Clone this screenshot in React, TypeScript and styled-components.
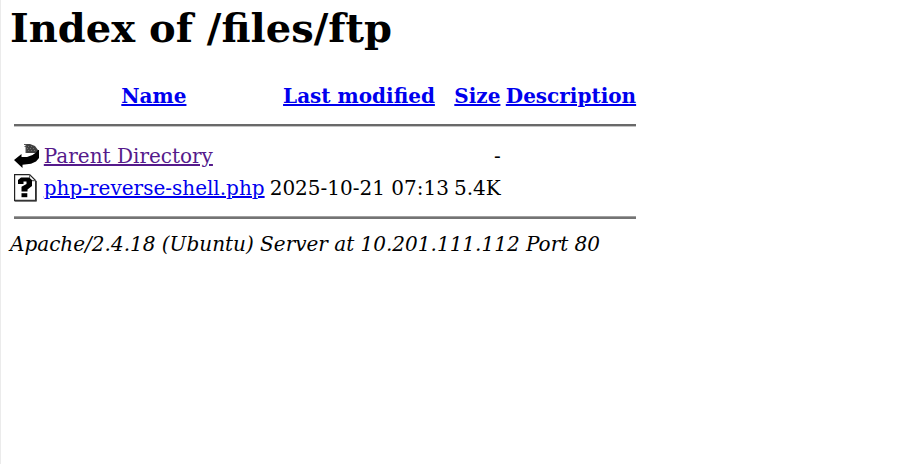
import React from "react";
import styled, { createGlobalStyle } from "styled-components";

const Global = createGlobalStyle`
  body {
    margin: 0;
    background: #fff;
    color: #000;
    font-family: "DejaVu Serif", serif;
  }
`;

const Page = styled.main`
  box-sizing: border-box;
  width: 906px;
  height: 464px;
  padding: 4px 9px;
  overflow: hidden;
  border-left: 1px solid #ebebeb;
  font-size: 20px;
  line-height: 24px;
  white-space: nowrap;
`;

const Title = styled.h1`
  margin: 0 0 33px;
  font-size: 40px;
  line-height: 47px;
`;

const Listing = styled.section`
  width: 622px;
  margin-left: 4px;
`;

const Row = styled.div<{ $gap?: number }>`
  display: grid;
  grid-template-columns: 24.8px 220.2px 180px 46.8px 1fr;
  column-gap: 5px;
  height: 24px;
  margin-bottom: ${({ $gap = 0 }) => $gap}px;
`;

const Heading = styled.div`
  display: flex;
  justify-content: center;
  font-weight: bold;
`;

const Cell = styled.div<{ $end?: boolean }>`
  display: flex;
  justify-content: ${({ $end }) => ($end ? "flex-end" : "flex-start")};
`;

const IconCell = styled.div`
  display: flex;
  align-items: center;
  height: 24px;
`;

const Icon = styled.svg`
  display: block;
  flex: none;
`;

const Link = styled.a<{ $visited?: boolean }>`
  color: ${({ $visited }) => ($visited ? "#551a8b" : "#0000ee")};
  text-decoration: underline;
`;

const Rule = styled.hr<{ $after: number; $raised?: boolean }>`
  box-sizing: border-box;
  height: 3px;
  margin: 0 0 ${({ $after }) => $after}px;
  border: 0;
  border-top: ${({ $raised }) => ($raised ? "1px solid #a0a0a0" : "2px solid #696969")};
  border-bottom: ${({ $raised }) => ($raised ? "2px solid #747474" : "1px solid #c4c4c4")};
`;

const Address = styled.address`
  font-style: italic;
`;

const BackIcon = () => (
  <Icon width="25" height="26" viewBox="0 0 25 26" aria-hidden="true">
    <path d="M12 1h4l5 2 3 4 .7 3H12z" fill="#404040" />
    <path d="M10 1.5h2M10.5 3.5H12M12 1v9" stroke="#555" fill="none" />
    <path d="M14 3.5h1m2 0h1M13 5.5h1m2 0h1m2 0h1M14 7.5h1m2 0h1m2 0h1" stroke="#707070" fill="none" />
    <path d="M25 7v8l-3 3.5-5 2.2-8.5 1V25L0 17l7.5-6v3h5.5l5.5-2L22 9.5 24 7z" fill="#000" />
  </Icon>
);

const UnknownIcon = () => (
  <Icon width="23" height="28" viewBox="0 0 23 28" aria-hidden="true">
    <path d="M.6.6h15l6 6v20H.6z" fill="#fff" stroke="#222" strokeWidth="1.2" />
    <path d="M15.6.6v6h6" fill="none" stroke="#666" strokeWidth="1.1" />
    <path d="M1 26.6h21V7" fill="none" stroke="#333" strokeWidth="1.6" />
    <path d="M4 10V6l3-2.5h8L18 6v6l-4.5 3.5v2H7.5v-4.8l5-2.7V7.5H9.5V10z" fill="#000" />
    <path d="M7.5 19.2h5.8v4H7.5z" fill="#000" />
  </Icon>
);

const columns = ["Name", "Last modified", "Size", "Description"];

export default function App() {
  return (
    <>
      <Global />
      <Page>
        <Title>Index of /files/ftp</Title>
        <Listing>
          <Row $gap={16}>
            <span />
            {columns.map((name) => (
              <Heading key={name}><Link href="#">{name}</Link></Heading>
            ))}
          </Row>
          <Rule $after={17} />
          <Row $gap={8}>
            <IconCell><BackIcon /></IconCell>
            <Cell><Link href="#" $visited>Parent Directory</Link></Cell>
            <span />
            <Cell $end>-</Cell>
          </Row>
          <Row $gap={16}>
            <IconCell><UnknownIcon /></IconCell>
            <Cell><Link href="#">php-reverse-shell.php</Link></Cell>
            <Cell $end>2025-10-21 07:13</Cell>
            <Cell $end>5.4K</Cell>
          </Row>
          <Rule $after={13} $raised />
        </Listing>
        <Address>Apache/2.4.18 (Ubuntu) Server at 10.201.111.112 Port 80</Address>
      </Page>
    </>
  );
}
